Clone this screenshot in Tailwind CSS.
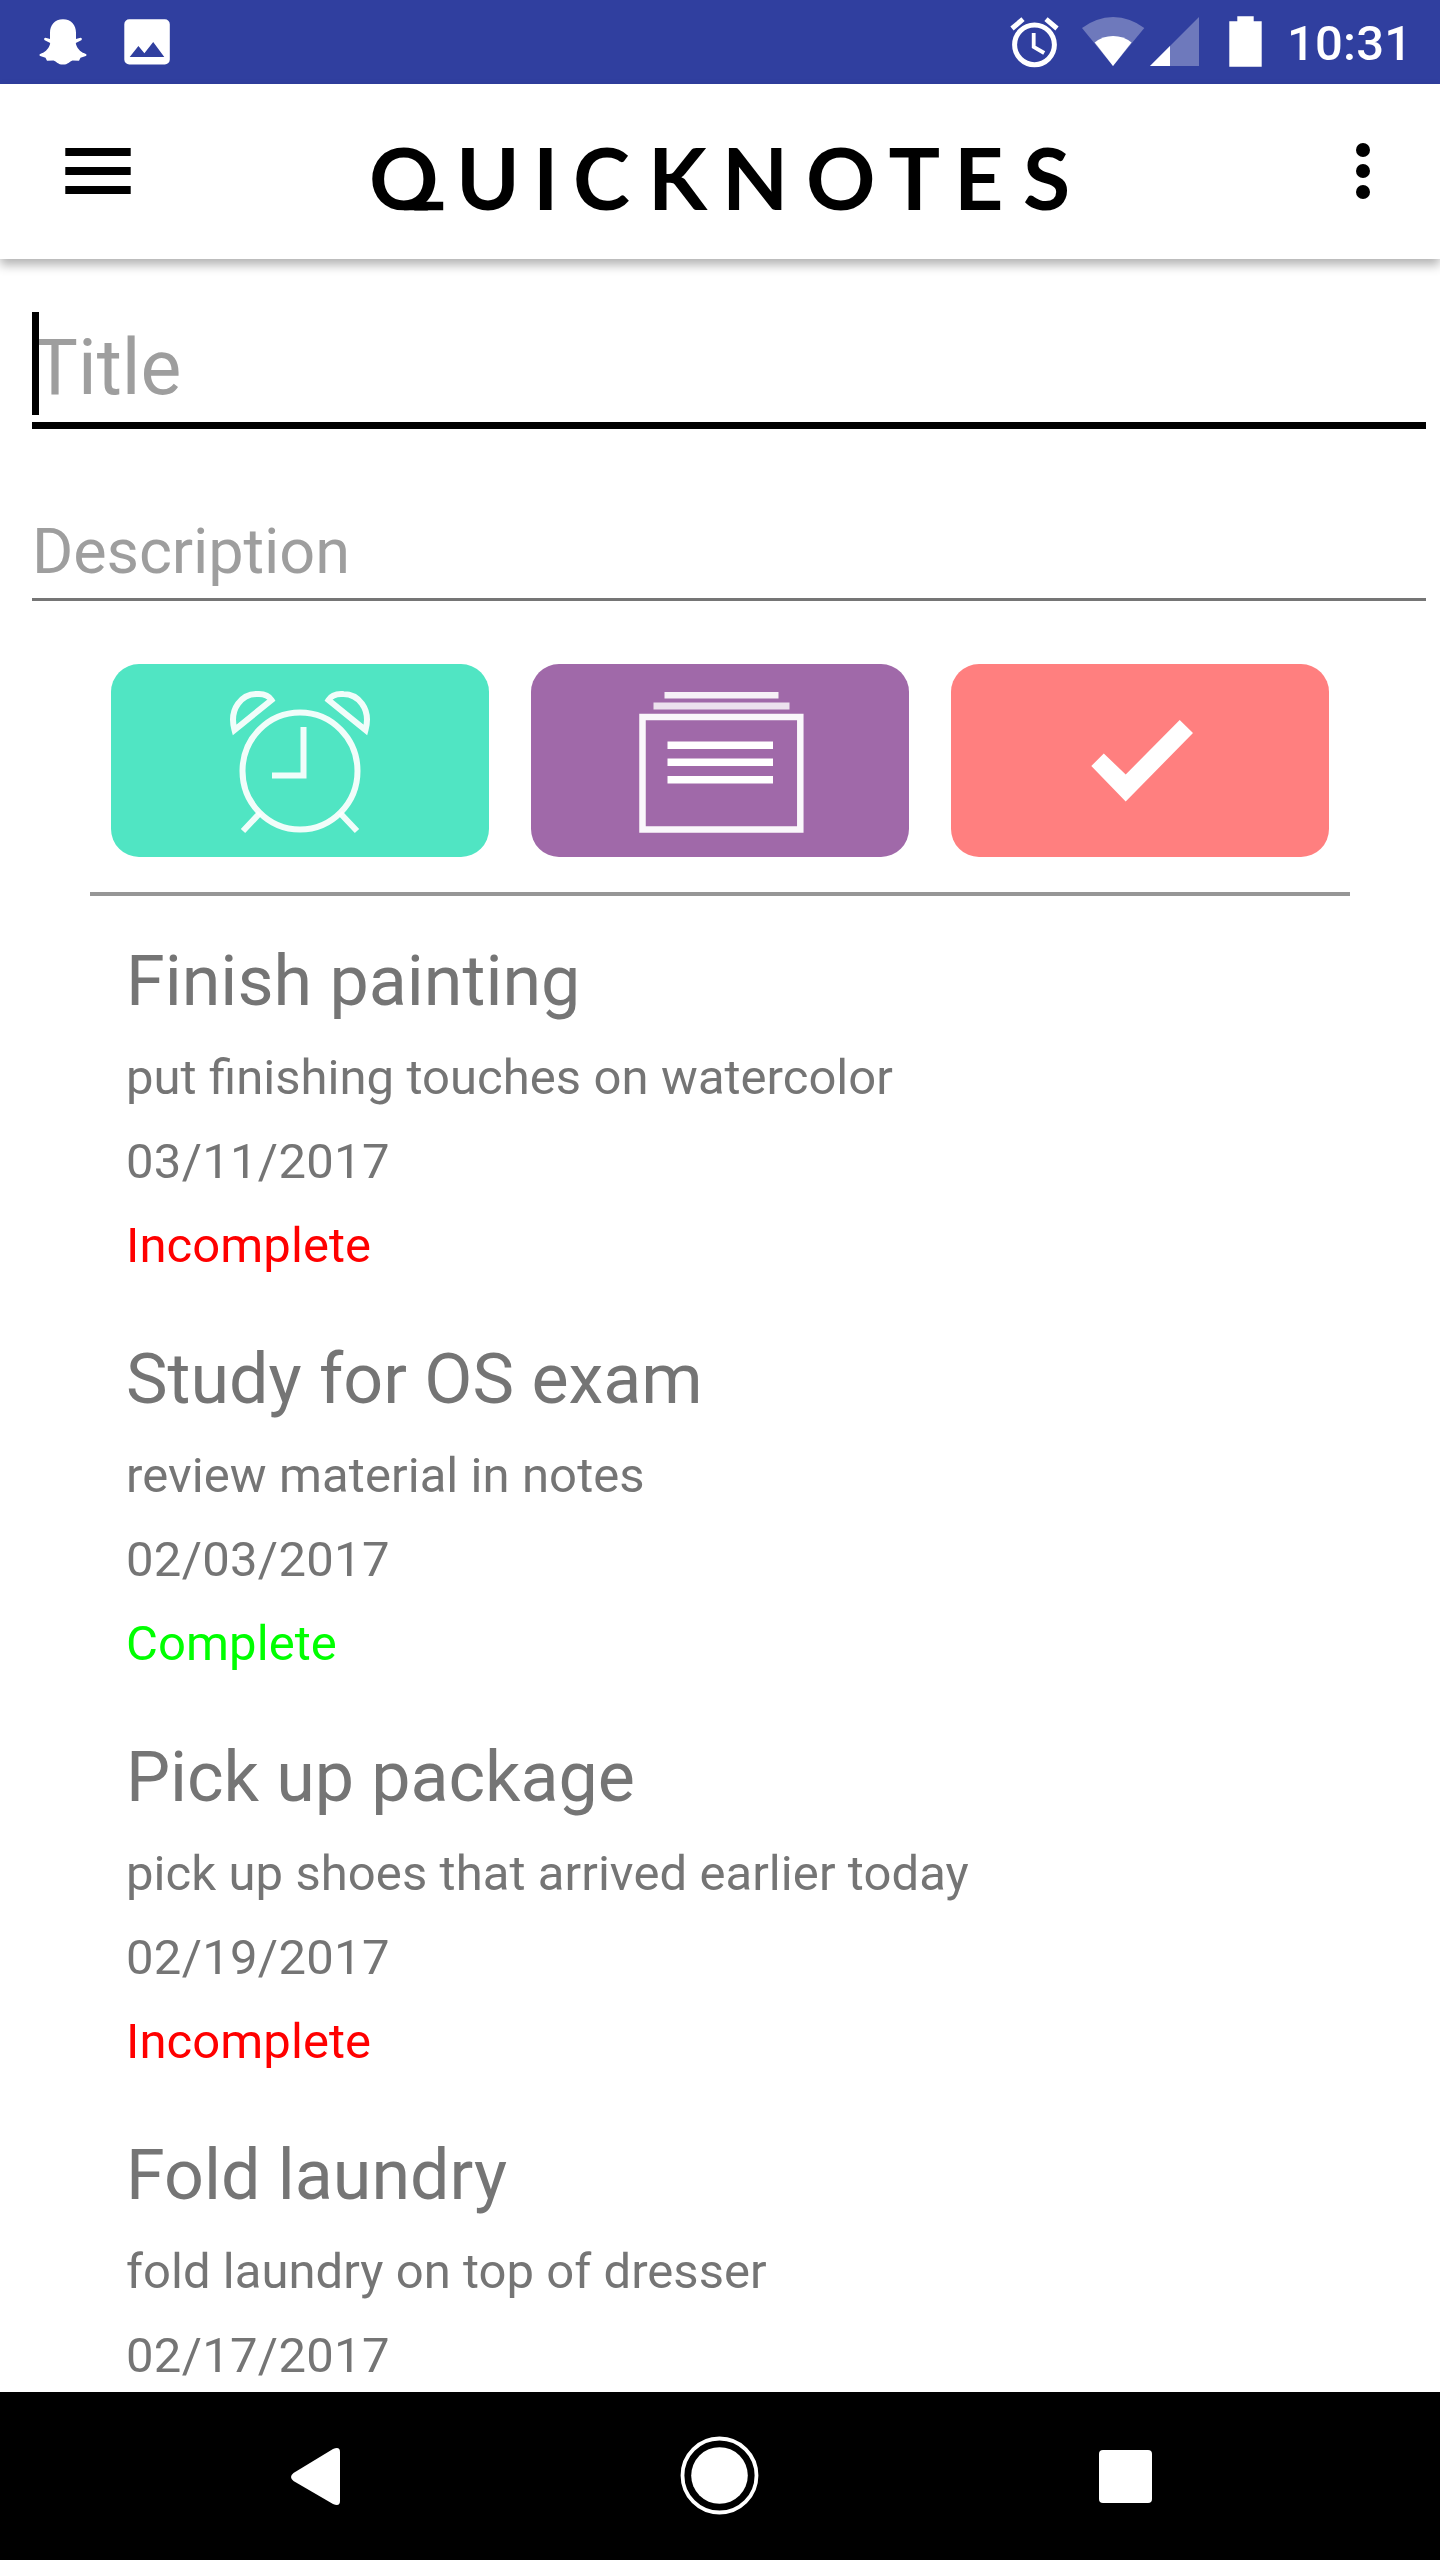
<!DOCTYPE html>
<html lang="en">
<head>
<meta charset="utf-8">
<title>QuickNotes</title>
<script src="https://cdn.jsdelivr.net/npm/@tailwindcss/browser@4"></script>
</head>
<body class="bg-white">
<div class="flex h-[2560px] w-[1440px] flex-col overflow-hidden bg-white font-['Roboto',sans-serif] text-[#757575]">
  <!-- status bar -->
  <div class="flex h-[84px] shrink-0 items-center justify-between bg-[#303f9f]">
    <svg class="h-[84px] w-[240px]" viewBox="0 0 240 84" fill="#fff">
      <path d="M63 19.3c-8.500 0-13 6-13 13.500v6.200l-4.500-1.200c-1.500.2-1.800 1.700-.8 2.400l5.500 2.700c-.5 4.500-4.500 9-8.500 10.300-2.600.8-3 2-1.500 2.700l5.300 1.900 1.500 2.900 6.500-.3c3 .8 4.500 4.200 9.500 4.200s6.500-3.400 9.500-4.200l6.500.3 1.500-2.900 5.300-1.900c1.500-.7 1.100-1.900-1.500-2.700-4-1.300-8-5.800-8.500-10.300l5.500-2.700c1-.7.7-2.200-.8-2.400L76 39v-6.200c0-7.500-4.500-13.500-13-13.500z"/>
      <path fill-rule="evenodd" d="M129.300 19.300h35.500a5 5 0 0 1 5 5v35.200a5 5 0 0 1-5 5h-35.500a5 5 0 0 1-5-5V24.300a5 5 0 0 1 5-5zM129.700 57h34.600l-11.100-15-8.800 11.300-6-7.300z"/>
    </svg>
    <div class="flex items-center">
      <svg class="h-[84px] w-[311px]" viewBox="980 0 311 84" fill="#fff">
        <circle cx="1034.500" cy="44.800" r="19.900" fill="none" stroke="#fff" stroke-width="5"/>
        <path d="M1033.700 33v13.800l10.500 6.200" fill="none" stroke="#fff" stroke-width="3.800"/>
        <path d="M1012 28.500l11-9.300M1057 28.500l-11-9.300" fill="none" stroke="#fff" stroke-width="5"/>
        <path fill-opacity=".3" d="M1082 28a50 50 0 0 1 62.300 0L1113 66z"/>
        <path d="M1094.700 42.500a29.500 29.500 0 0 1 36.800 0L1113 66z"/>
        <path fill-opacity=".3" d="M1199 17v49h-49z"/>
        <path d="M1170 46v20h-20z"/>
        <path d="M1237.300 16.300h16.400v5h8v45.400h-32.400V21.300h8z"/>
      </svg>
      <span class="w-[149px] -translate-x-[4px] pt-[3px] text-[49px] leading-[84px] font-medium tracking-[0.2px] text-white">10:31</span>
    </div>
  </div>

  <!-- app bar -->
  <header class="flex h-[175px] shrink-0 items-center bg-white pr-[50px] pl-[65px] shadow-[0_6px_10px_rgba(0,0,0,0.3)]">
    <svg class="h-[46px] w-[66px] -translate-y-px" viewBox="0 0 66 46"><path d="M.3 4h65.400M.3 23h65.400M.3 42h65.400" stroke="#000" stroke-width="7.800"/></svg>
    <svg class="ml-[219px] h-[175px] w-[740px]" viewBox="350 84 740 175">
      <clipPath id="wordmark"><path d="M350 84h106v126.500H350zM456 84h634v175H456z"/></clipPath>
      <text clip-path="url(#wordmark)" y="210.400" x="369 456 533 573 648 722 806 888.500 954 1023" font-family="Lato" font-weight="700" font-size="86" fill="#000">QUICKNOTES</text>
      <path d="M404 201.700h39.200v8.600H404z"/>
    </svg>
    <svg class="ml-auto h-14 w-[54px] -translate-y-px" viewBox="0 0 54 56"><circle cx="27" cy="7" r="7"/><circle cx="27" cy="28" r="7"/><circle cx="27" cy="49" r="7"/></svg>
  </header>

  <!-- note form -->
  <section class="flex shrink-0 flex-col pr-[14px] pl-8">
    <div class="relative mt-[53px] h-[117px] border-b-[7px] border-black text-[77px] leading-[113px] text-[#9e9e9e]">
      <span>Title</span>
      <span class="absolute top-0 left-0 h-[103px] w-[7px] bg-black"></span>
    </div>
    <div class="mt-[73px] h-[99px] border-b-[3px] border-[#757575] text-[63px] leading-[100px] tracking-[-0.1px] text-[#9e9e9e]">Description</div>
  </section>

  <!-- actions -->
  <div class="mx-[90px] mt-[63px] flex h-[232px] shrink-0 justify-center gap-[42px] border-b-4 border-[#969696]">
    <button class="h-[193px] w-[378px] rounded-[28px] bg-[#50e5c3]">
      <svg class="h-[193px] w-[378px]" viewBox="111 664 378 193" fill="none" stroke="#fff" stroke-opacity=".92" stroke-width="6">
        <ellipse cx="300" cy="771" rx="57.500" ry="58.500"/>
        <path d="M303.500 727v48.500H272M260 813l-17 18M340 813l17 18"/>
        <path d="M234.500 730c-6-22 8-36 22-36 6-.5 12 1 15 6zM365.500 730c6-22-8-36-22-36-6-.5-12 1-15 6z"/>
      </svg>
    </button>
    <button class="h-[193px] w-[378px] rounded-[28px] bg-[#a069a9]">
      <svg class="h-[193px] w-[378px]" viewBox="531 664 378 193" fill="#fff">
        <path fill-opacity=".9" d="M664.500 692h114v6.500h-114z"/>
        <path fill-opacity=".8" d="M653.500 702.500h136v7h-136z"/>
        <path d="M642.500 717h157.800v112.500H642.500z" fill="none" stroke="#fff" stroke-opacity=".95" stroke-width="6.500"/>
        <path d="M667.500 741.500H773v7.500H667.500zM667.500 758.500H773v7.500H667.500zM667.500 776H773v7.500H667.500z"/>
      </svg>
    </button>
    <button class="h-[193px] w-[378px] rounded-[28px] bg-[#ff7f7f]">
      <svg class="h-[193px] w-[378px]" viewBox="951 664 378 193" fill="#fff"><path d="M1091.300 766l12.500-12.500 21.900 21 54-54.500 13.300 13-67.300 68.500z"/></svg>
    </button>
  </div>

  <!-- notes -->
  <main class="flex min-h-0 flex-1 flex-col gap-[37px] overflow-hidden pt-[31px] pl-[126px] text-[49px] leading-[84px] tracking-[0.08px]">
    <article class="shrink-0">
      <h2 class="pb-px text-[70px] leading-[108px] tracking-normal">Finish painting</h2>
      <p class="tracking-normal [word-spacing:0.4px]">put finishing touches on watercolor</p>
      <p class="tracking-[0.3px]">03/11/2017</p>
      <p class="text-[#ff0000]">Incomplete</p>
    </article>
    <article class="shrink-0">
      <h2 class="pb-px text-[70px] leading-[108px] tracking-normal">Study for OS exam</h2>
      <p>review material in notes</p>
      <p class="tracking-[0.3px]">02/03/2017</p>
      <p class="text-[#00ff00]">Complete</p>
    </article>
    <article class="shrink-0">
      <h2 class="pb-px text-[70px] leading-[108px] tracking-[-0.08px]">Pick up package</h2>
      <p>pick up shoes that arrived earlier today</p>
      <p class="tracking-[0.3px]">02/19/2017</p>
      <p class="text-[#ff0000]">Incomplete</p>
    </article>
    <article class="shrink-0">
      <h2 class="pb-px text-[70px] leading-[108px] tracking-normal">Fold laundry</h2>
      <p class="tracking-[0.03px]">fold laundry on top of dresser</p>
      <p class="tracking-[0.3px]">02/17/2017</p>
    </article>
  </main>

  <!-- navigation bar -->
  <nav class="h-[168px] shrink-0 bg-black">
    <svg class="h-[168px] w-[1440px]" viewBox="0 2392 1440 168" fill="#fff">
      <path d="M333 2449q7-3 7 3v49q0 6-7 3l-39.500-23q-5-4 0-8z"/>
      <circle cx="719.500" cy="2475.500" r="28.300"/>
      <circle cx="719.500" cy="2475.500" r="37" fill="none" stroke="#fff" stroke-width="3.800"/>
      <rect x="1099" y="2450" width="53" height="53" rx="4"/>
    </svg>
  </nav>
</div>
</body>
</html>
